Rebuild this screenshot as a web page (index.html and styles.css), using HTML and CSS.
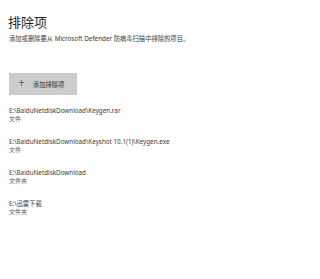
FILE: index.html
```html
<!DOCTYPE html>
<html lang="zh-CN">
<head>
  <meta charset="UTF-8">
  <title>排除项</title>
  <meta name="viewport" content="width=device-width, initial-scale=1.0">
  <link rel="stylesheet" href="styles.css">
</head>
<body>
  <!-- Header -->
  <section class="page-head">
    <h1>排除项</h1>
    <p class="desc">添加或删除要从 Microsoft Defender 防病毒扫描中排除的项目。</p>
  </section>

  <!-- Add button -->
  <button class="add-btn" type="button"><span class="plus">+</span>添加排除项</button>

  <!-- Exclusion list -->
  <ul class="exclusions">
    <li>
      <div class="path">E:\BaiduNetdiskDownload\Keygen.rar</div>
      <div class="kind">文件</div>
    </li>
    <li>
      <div class="path">E:\BaiduNetdiskDownload\Keyshot 10.1(1)\Keygen.exe</div>
      <div class="kind">文件</div>
    </li>
    <li>
      <div class="path">E:\BaiduNetdiskDownload</div>
      <div class="kind">文件夹</div>
    </li>
    <li>
      <div class="path">E:\迅雷下载</div>
      <div class="kind">文件夹</div>
    </li>
  </ul>
</body>
</html>
```

FILE: styles.css
```css
/* Layout */
body {
  font-family: "Noto Sans", "Noto Sans CJK SC", sans-serif;
  margin: 0;
  padding: 13px 0 0 9px;
  background: #ffffff;
  color: #1f1f1f;
}

h1 {
  font-family: "Noto Sans CJK SC", sans-serif;
  font-size: 13px;
  font-weight: normal;
  line-height: 18px;
  margin: 0 0 0 -1px;
}

.desc {
  font-size: 6.3px;
  line-height: 10px;
  margin: 3px 0 0;
  color: #3a3a3a;
}

.add-btn {
  display: flex;
  align-items: center;
  width: 68px;
  height: 22px;
  margin-top: 29px;
  padding: 0 0 0 9px;
  border: 0;
  background: #cccccc;
  font-family: inherit;
  font-size: 6.3px;
  color: #333;
}

.plus {
  font-size: 12px;
  font-weight: 300;
  margin-right: 8px;
  line-height: 1;
}

.exclusions {
  list-style: none;
  margin: 11px 0 0;
  padding: 0;
}

.exclusions li {
  height: 31px;
}

.path {
  font-size: 6.3px;
  line-height: 9px;
  color: #3a3a3a;
}

.kind {
  font-size: 6px;
  line-height: 9px;
  color: #5a5a5a;
}
```
